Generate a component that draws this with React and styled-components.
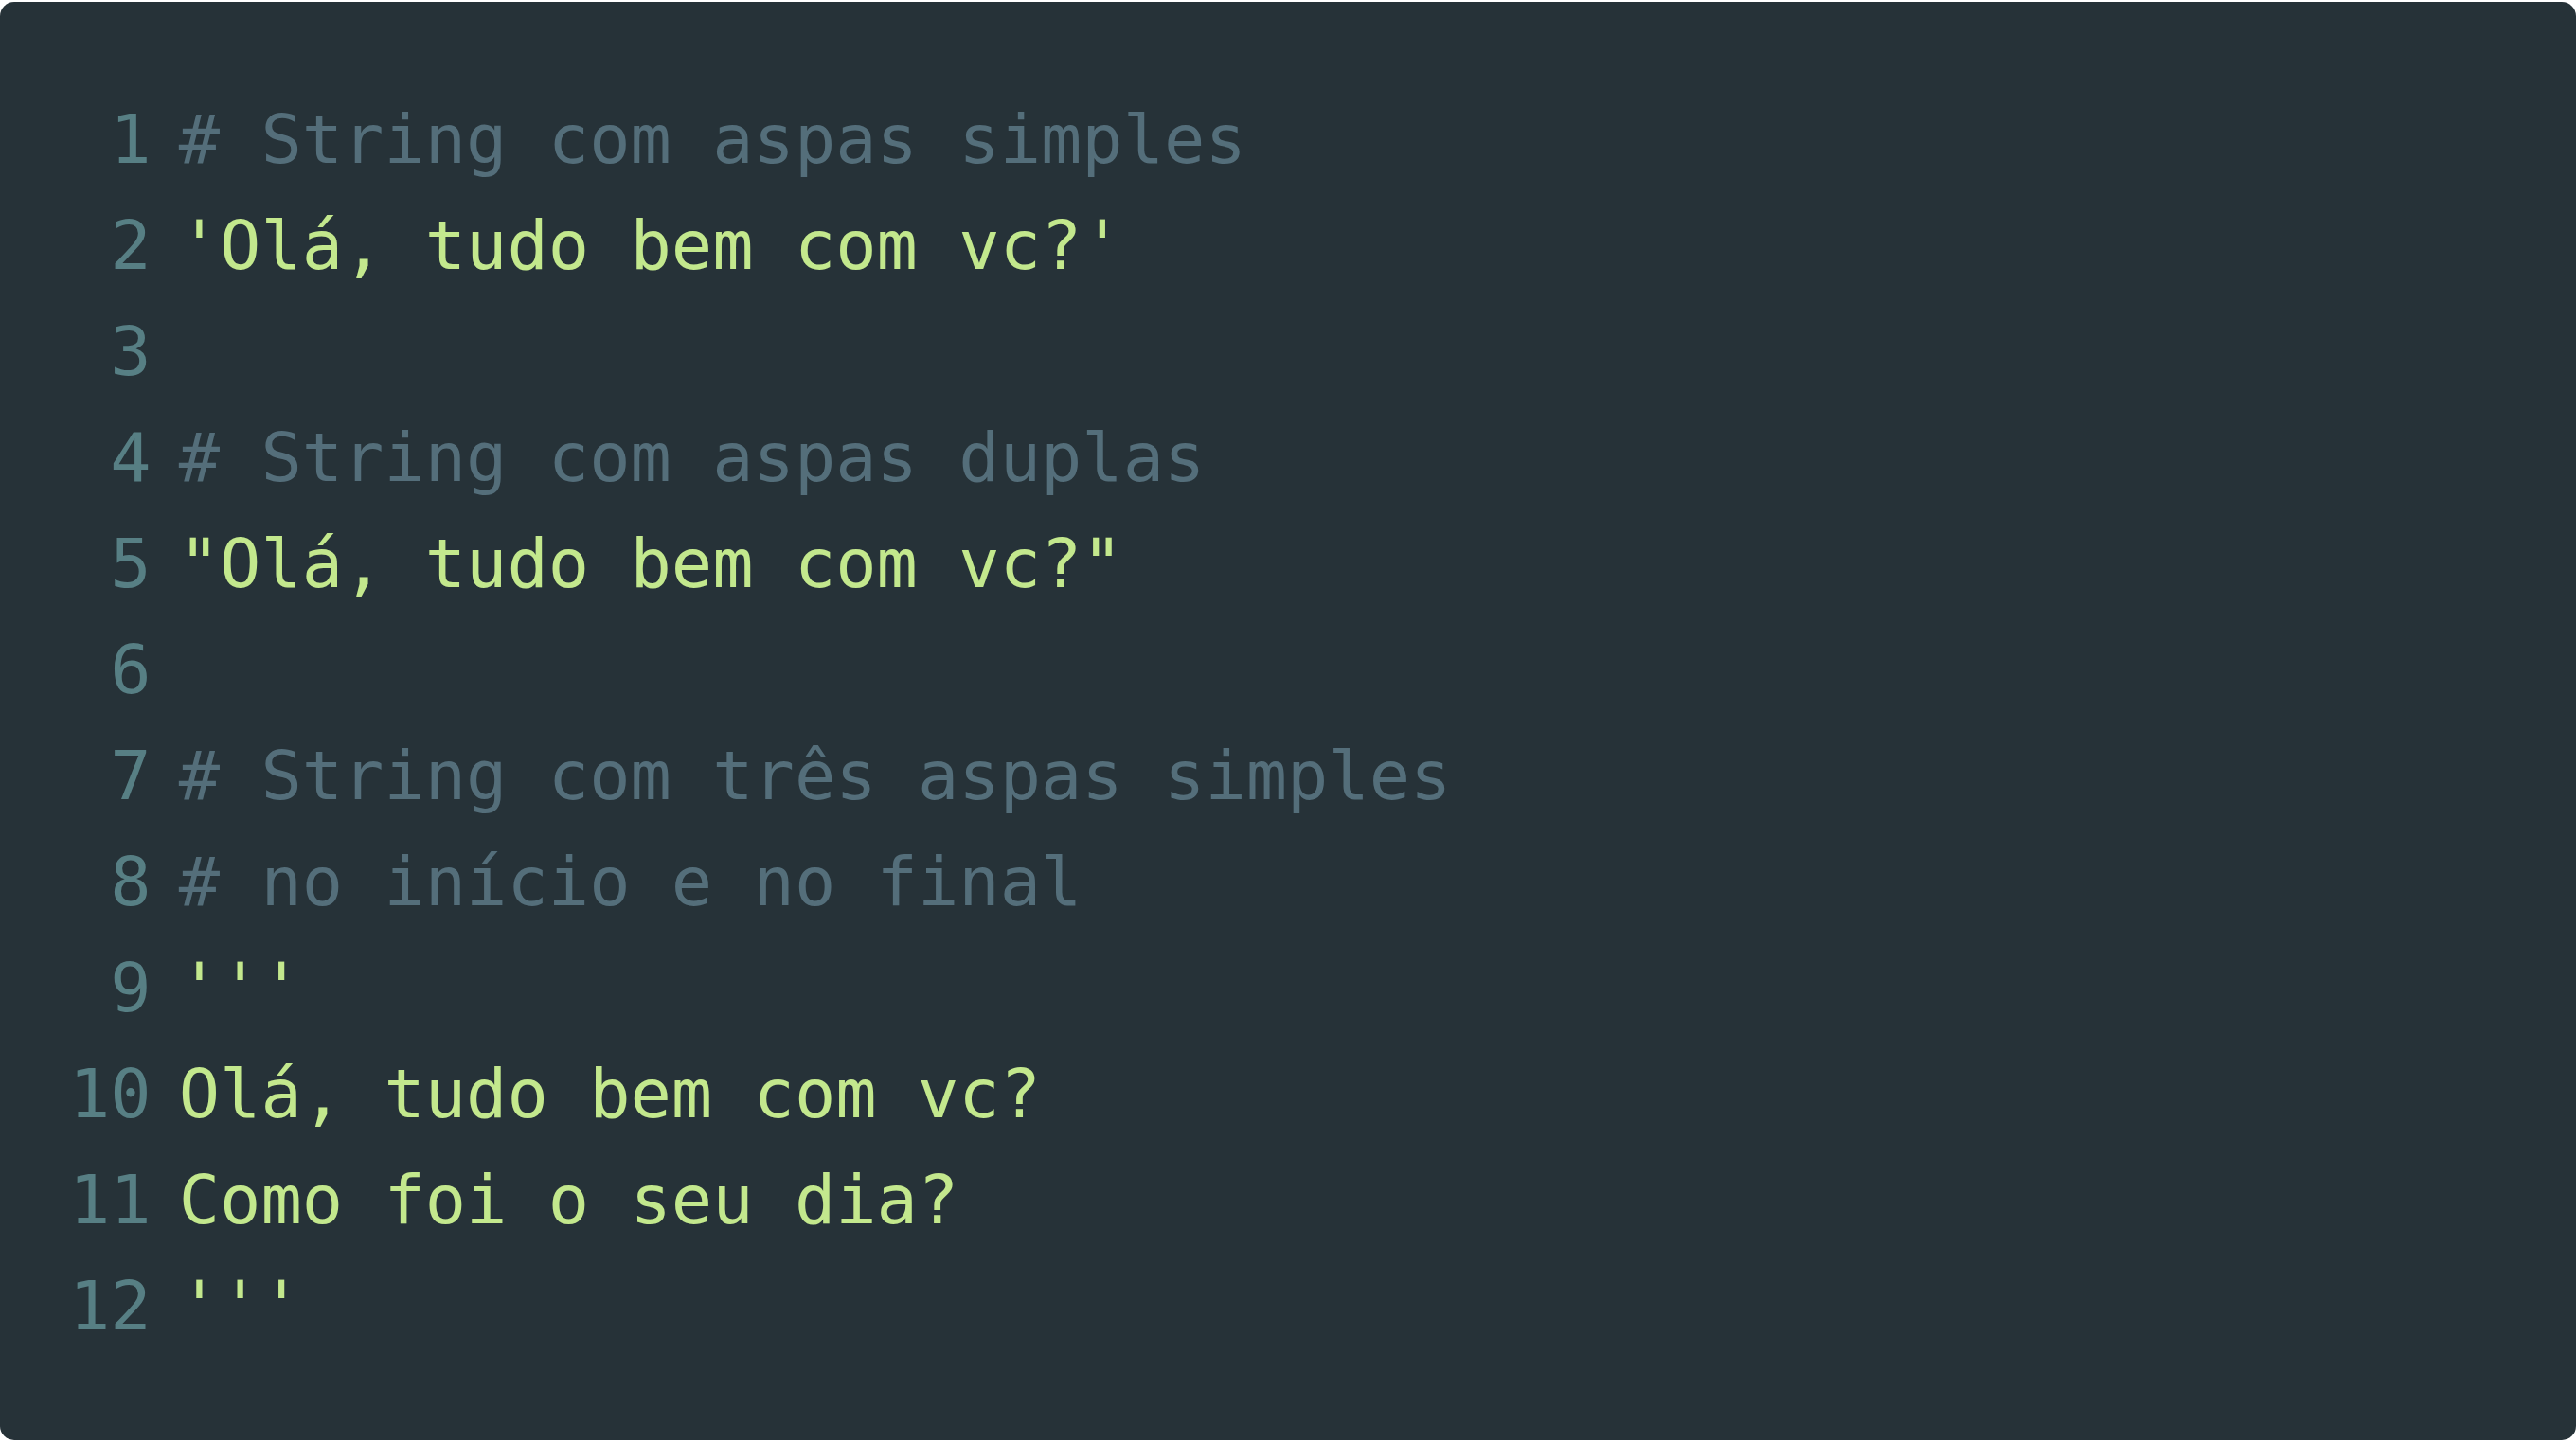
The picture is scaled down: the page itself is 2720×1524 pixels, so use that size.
import React from 'react'
import styled, {createGlobalStyle} from 'styled-components'

const lines = [
    {text: '# String com aspas simples', kind: 'comment'},
    {text: "'Olá, tudo bem com vc?'", kind: 'string'},
    {text: '', kind: 'string'},
    {text: '# String com aspas duplas', kind: 'comment'},
    {text: '"Olá, tudo bem com vc?"', kind: 'string'},
    {text: '', kind: 'string'},
    {text: '# String com três aspas simples', kind: 'comment'},
    {text: '# no início e no final', kind: 'comment'},
    {text: "'''", kind: 'string'},
    {text: 'Olá, tudo bem com vc?', kind: 'string'},
    {text: 'Como foi o seu dia?', kind: 'string'},
    {text: "'''", kind: 'string'},
]

const App = () => {
    return (
        <Page>
            <GlobalStyle/>
            <Card>
                <Code>
                    {lines.map((line, i) => (
                        <Row key={i}>
                            <LineNo>{i + 1}</LineNo>
                            <Text kind={line.kind}>{line.text}</Text>
                        </Row>
                    ))}
                </Code>
            </Card>
        </Page>
    );
};

const GlobalStyle = createGlobalStyle`
html, body {
  margin: 0;
  padding: 0;
  background: #ffffff;
}
`

const Page = styled.div`
padding-top: 2px;
width: 2720px;
`

const Card = styled.div`
box-sizing: border-box;
height: 1519px;
background: #263238;
border-radius: 15px;
padding: 89px 0 0 73px;
`

const Code = styled.div`
font-family: "DejaVu Sans Mono", "Liberation Mono", monospace;
font-size: 72px;
line-height: 112px;
`

const Row = styled.div`
display: flex;
height: 112px;
white-space: pre;
`

const LineNo = styled.span`
width: 2ch;
text-align: right;
color: #577f84;
margin-right: 29px;
`

const Text = styled.span`
color: ${p => p.kind === 'comment' ? '#546e7a' : '#c3e88d'};
`

export default App;
